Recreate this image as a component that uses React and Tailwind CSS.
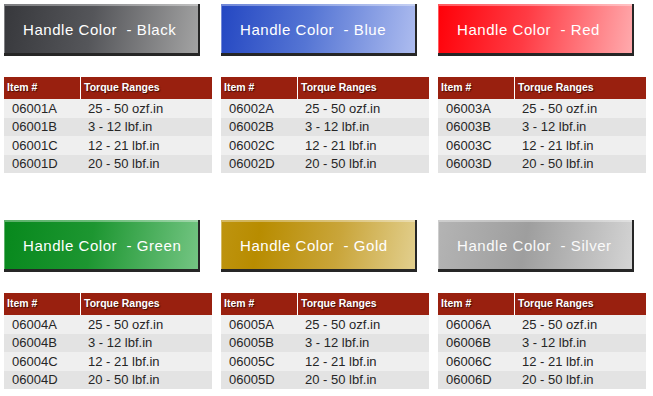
import React from "react";

// Handle colour groups
const GROUPS = [
  { id: "06001", name: "Black", bg: "bg-[linear-gradient(100deg,#37383c_0%,#55565a_45%,#a3a3a3_100%)]", text: "text-white" },
  { id: "06002", name: "Blue", bg: "bg-[linear-gradient(100deg,#2447c2_0%,#5575d4_45%,#adbcef_100%)]", text: "text-white" },
  { id: "06003", name: "Red", bg: "bg-[linear-gradient(100deg,#ff0008_0%,#ff3b44_45%,#ffaaad_100%)]", text: "text-white" },
  { id: "06004", name: "Green", bg: "bg-[linear-gradient(100deg,#07881c_0%,#1d9631_45%,#74c583_100%)]", text: "text-white" },
  { id: "06005", name: "Gold", bg: "bg-[linear-gradient(100deg,#be9410_0%,#b88c00_20%,#c9a53a_60%,#e2cf8e_100%)]", text: "text-white" },
  { id: "06006", name: "Silver", bg: "bg-[linear-gradient(100deg,#b4b4b4_0%,#9e9e9e_45%,#d4d4d4_100%)]", text: "text-[#fafafa]" },
];

const RANGES = [
  { suffix: "A", range: "25 - 50 ozf.in" },
  { suffix: "B", range: "3 - 12 lbf.in" },
  { suffix: "C", range: "12 - 21 lbf.in" },
  { suffix: "D", range: "20 - 50 lbf.in" },
];

const HandleButton = ({ name, bg, text }) => (
  <div
    className={`w-[196px] h-[52px] flex items-center pl-[19px] pt-[4px] border-r-2 border-b-[3px] border-[#262626] shadow-[inset_1px_2px_0_rgba(255,255,255,0.35)] ${bg}`}>
    <span className={`text-[15px] tracking-[0.55px] whitespace-pre ${text}`}>
      {`Handle Color  - ${name}`}
    </span>
  </div>
);

const TorqueTable = ({ id }) => (
  <div className="w-[208px]">
    <div className="flex h-[22.5px] bg-[#99200f] text-white font-bold text-[10.5px] [text-shadow:1px_1px_1px_rgba(0,0,0,0.6)]">
      <div className="w-[77px] flex items-center pl-[3px] border-r border-white">Item #</div>
      <div className="flex-1 flex items-center pl-[3px]">Torque Ranges</div>
    </div>
    {RANGES.map((r, i) => (
      <div
        key={r.suffix}
        className={`flex h-[18.5px] items-center text-[13px] text-[#262626] ${
          i % 2 === 0 ? "bg-[#efefef]" : "bg-[#e3e3e3]"
        }`}>
        <div className="w-[78px] pl-[8px]">
          {id}
          {r.suffix}
        </div>
        <div className="flex-1 pl-[6px]">{r.range}</div>
      </div>
    ))}
  </div>
);

export default function App() {
  return (
    <div className="w-[653px] h-[396px] bg-white pl-1 pt-1 font-['Liberation_Sans',Arial,sans-serif]">
      <div className="grid grid-cols-[208px_208px_208px] gap-x-[9px] gap-y-[47px]">
        {GROUPS.map((g) => (
          <div key={g.id} className="flex flex-col">
            <HandleButton name={g.name} bg={g.bg} text={g.text} />
            <div className="mt-[20.5px]">
              <TorqueTable id={g.id} />
            </div>
          </div>
        ))}
      </div>
    </div>
  );
}
